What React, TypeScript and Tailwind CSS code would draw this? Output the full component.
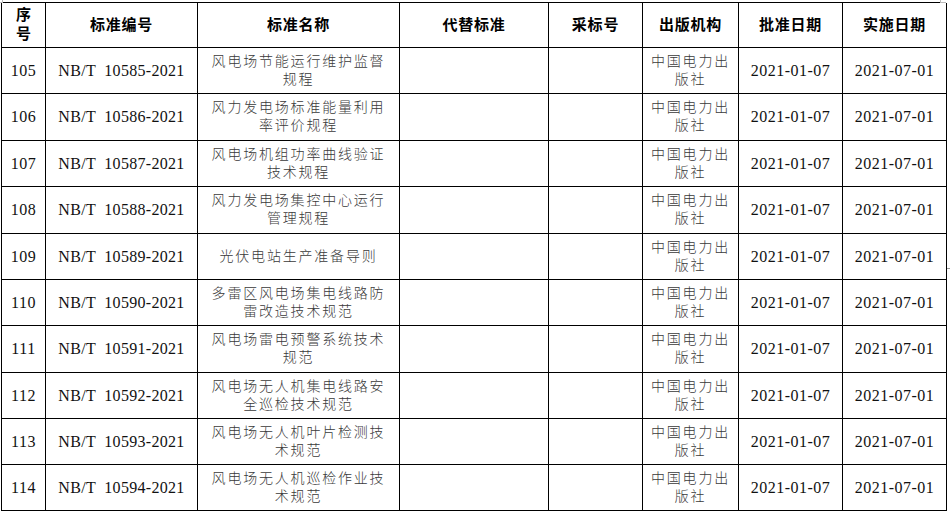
const rows = [
  { no: '105', code: 'NB/T 10585-2021', name: ['风电场节能运行维护监督', '规程'] },
  { no: '106', code: 'NB/T 10586-2021', name: ['风力发电场标准能量利用', '率评价规程'] },
  { no: '107', code: 'NB/T 10587-2021', name: ['风电场机组功率曲线验证', '技术规程'] },
  { no: '108', code: 'NB/T 10588-2021', name: ['风力发电场集控中心运行', '管理规程'] },
  { no: '109', code: 'NB/T 10589-2021', name: ['光伏电站生产准备导则'] },
  { no: '110', code: 'NB/T 10590-2021', name: ['多雷区风电场集电线路防', '雷改造技术规范'] },
  { no: '111', code: 'NB/T 10591-2021', name: ['风电场雷电预警系统技术', '规范'] },
  { no: '112', code: 'NB/T 10592-2021', name: ['风电场无人机集电线路安', '全巡检技术规范'] },
  { no: '113', code: 'NB/T 10593-2021', name: ['风电场无人机叶片检测技', '术规范'] },
  { no: '114', code: 'NB/T 10594-2021', name: ['风电场无人机巡检作业技', '术规范'] },
];

const headers = ['标准编号', '标准名称', '代替标准', '采标号', '出版机构', '批准日期', '实施日期'];

const cell = 'flex flex-col items-center justify-center border-r border-b border-black text-center';
const cjk = 'text-[14px] font-light leading-[18px] tracking-[1.8px] text-[#3a3a3a]';
const latin = 'text-[16px] tracking-[0.5px] text-[#111]';

export default function App() {
  return (
    <div
      className="relative h-[516px] w-[950px] overflow-hidden bg-white"
      style={{ fontFamily: '"Liberation Serif", "Noto Sans CJK SC", serif' }}
    >
      {/* corner marks from the scan */}
      <span className="absolute left-0 top-0 h-[3px] w-[3px] border-r border-b border-[#bbb]" />
      <span className="absolute right-[4px] top-0 h-[3px] w-[6px] border-l border-b border-[#bbb]" />
      <span className="absolute right-0 top-[268px] h-px w-[3px] bg-[#999]" />

      <div className="ml-px mt-[2px] grid w-[945px] grid-cols-[44px_152px_202px_149px_94px_96px_104px_104px] grid-rows-[45px_46px_47px_46px_47px_46px_46px_47px_46px_46px_46px] border-l border-t border-black">
        <div className={`${cell} text-[15px] font-bold leading-[19px] text-black`}>
          <span>序</span>
          <span>号</span>
        </div>
        {headers.map((h) => (
          <div key={h} className={`${cell} text-[15px] font-bold tracking-[0.8px] text-black`}>
            {h}
          </div>
        ))}

        {rows.map((r) => (
          <div key={r.no} className="contents">
            <div className={`${cell} ${latin}`}>{r.no}</div>
            <div className={`${cell} text-[16px] tracking-[0.3px] text-[#111]`}>
              <span className="whitespace-pre">{r.code.replace(' ', '\u2002')}</span>
            </div>
            <div className={`${cell} ${cjk}`}>
              {r.name.map((line) => (
                <span key={line} className="whitespace-nowrap">{line}</span>
              ))}
            </div>
            <div className={cell} />
            <div className={cell} />
            <div className={`${cell} ${cjk}`}>
              <span>中国电力出</span>
              <span>版社</span>
            </div>
            <div className={`${cell} ${latin}`}>2021-01-07</div>
            <div className={`${cell} ${latin}`}>2021-07-01</div>
          </div>
        ))}
      </div>
    </div>
  );
}
